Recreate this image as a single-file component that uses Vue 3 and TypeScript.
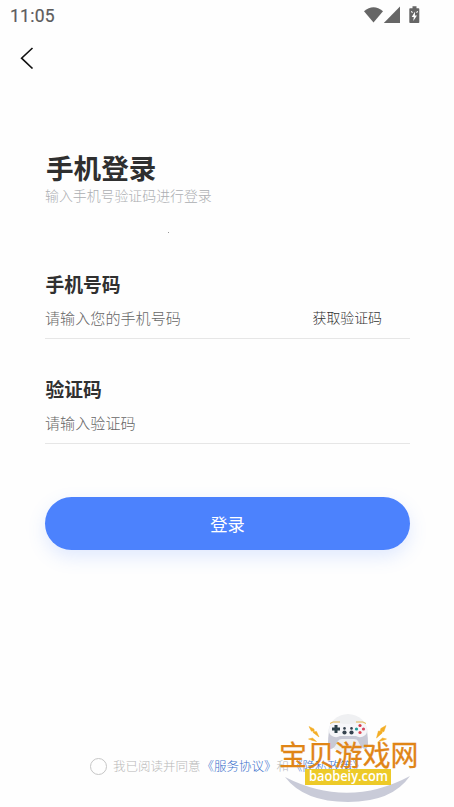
<script setup lang="ts">
import { ref } from 'vue'

interface Field {
  label: string
  placeholder: string
  type: string
  action?: string
}

const fields: Field[] = [
  { label: '手机号码', placeholder: '请输入您的手机号码', type: 'tel', action: '获取验证码' },
  { label: '验证码', placeholder: '请输入验证码', type: 'text' },
]
const values = ref<string[]>(['', ''])
const agreed = ref(false)
</script>

<template>
  <main class="screen">
    <header class="status">
      <span class="time">11:05</span>
      <svg class="status-icons" width="58" height="20" viewBox="0 0 58 20">
        <path d="M1 5.200Q10.500 -2.800 20 5.200L10.500 16.500Z" />
        <path d="M37 .6V17H20.800Z" />
        <path d="M49.500 .2h4v2h2q.8 0 .8.8v13.200q0 .8-.8.8h-8.400q-.8 0-.8-.8V3q0-.8.8-.8h2.400z" />
        <path class="bolt" d="M52.100 5.600L48.700 11h2.100l-.5 4.100 3.700-5.500h-2.100z" />
        <path class="ticks" d="M48.500 5l.8 2M54.500 5l-.8 2" />
      </svg>
    </header>
    <nav class="nav">
      <button class="back" aria-label="返回">
        <svg width="14" height="22" viewBox="0 0 14 22"><path d="M12.500 1L1.600 11.200 12.500 21.500" /></svg>
      </button>
    </nav>

    <form class="form" @submit.prevent>
      <h1>手机登录</h1>
      <p class="sub">输入手机号验证码进行登录</p>
      <i class="speck"></i>
      <section v-for="(f, i) in fields" :key="f.label" class="field">
        <label :for="'f' + i">{{ f.label }}</label>
        <div class="row">
          <input :id="'f' + i" v-model="values[i]" :type="f.type" :placeholder="f.placeholder" />
          <button v-if="f.action" type="button" class="code">{{ f.action }}</button>
        </div>
      </section>
      <button class="submit" type="submit">登录</button>
    </form>

    <footer class="terms">
      <button class="radio" :class="{ on: agreed }" aria-label="同意" @click="agreed = !agreed"></button>
      <span>我已阅读并同意</span><a>《服务协议》</a><span class="and">和</span><a>《隐私政策》</a>
    </footer>

    <aside class="mark">
      <svg class="art" width="144" height="92" viewBox="0 0 144 92">
        <circle cx="70" cy="21" r="20" fill="#eff0f2" />
        <path d="M7 64Q70 96 132 63Q114 89 70 89T7 64Z" fill="#c9cbd8" />
        <path d="M54 12Q50 19 50 30Q50 36 53 36Q57 35 60 28Q61 26 64 26H76Q79 26 80 28Q83 35 87 36Q90 36 90 30Q90 19 86 12Z" fill="#c8c9d5" />
        <path d="M52 13Q55 9 60 10Q70 12 80 10Q85 9 88 13Q91 21 85 23.500Q81 25 78 23H62Q59 25 55 23.500Q49 21 52 13Z" fill="#f6f6f9" />
        <path d="M52 10.500l3-1.500h7M78 9h7l3 1.500" fill="none" stroke="#e3b64c" stroke-width="1" />
        <path d="M58 12v8M54 16h8" stroke="#2d4149" stroke-width="3" />
        <g fill="#35424e"><circle cx="66.500" cy="19.500" r="2.100" /><circle cx="73.500" cy="19.500" r="2.100" /><circle cx="66.500" cy="15.400" r="1.300" /><circle cx="73.500" cy="15.400" r="1.300" /></g>
        <circle cx="82" cy="12.500" r="1.600" fill="#d93c4b" /><circle cx="82" cy="19.500" r="1.600" fill="#df4b56" />
        <circle cx="78.500" cy="16" r="1.600" fill="#249b9a" /><circle cx="85.500" cy="16" r="1.600" fill="#d74760" />
        <g fill="#f3ad24" stroke="#f3ad24" stroke-width=".5">
          <path d="M31 13.500L36 16l.3 2.700 2.200-.3L41 24l-6-4.600.4-1.400-2 .2z" />
          <path d="M108 12.500L102.800 15.500l-.5 2.700-1.900-.2L98.500 25l5.800-5.100-.6-1.400 2.200.2z" />
          <path d="M30.500 26l4-1 4 3.500-4-1zM108.500 26l-4-1-4 3.500 4-1z" />
        </g>
      </svg>
      <strong class="brand">宝贝游戏网</strong>
      <span class="domain"><svg width="86" height="16" viewBox="0 0 86 16"><text x="4" y="12" textLength="79" lengthAdjust="spacingAndGlyphs">baobeiy.com</text></svg></span>
    </aside>
  </main>
</template>

<style>
body { background: #fefefe; }
</style>

<style scoped>
* { box-sizing: border-box; }
.screen {
  position: relative;
  display: flex;
  flex-direction: column;
  height: 807px;
  overflow: hidden;
  background: #fefefe;
  font-family: "Noto Sans CJK SC", sans-serif;
  font-weight: 300;
  color: #303030;
}
button { padding: 0; border: 0; background: none; font-family: inherit; font-weight: inherit; }
.status {
  display: flex;
  justify-content: space-between;
  height: 32px;
  padding: 6px 33px 0 10px;
}
.time { font: 400 17.5px/20px Roboto, sans-serif; letter-spacing: .25px; color: #5c5c5c; -webkit-text-stroke: .2px #5c5c5c; }
.status-icons { fill: #666; }
.status-icons .bolt { fill: #fff; }
.status-icons .ticks { stroke: #fff; stroke-width: 1; }
.nav { display: flex; height: 52px; padding: 15px 20px; }
.back { display: flex; width: 14px; height: 22px; }
.back path { fill: none; stroke: #111; stroke-width: 1.6; }
.form { display: flex; flex-direction: column; padding: 65px 44px 0 45px; }
h1 { margin: 0; padding-left: 1px; font-size: 27.6px; font-weight: 700; line-height: 36px; color: #2f2f2f; }
.sub { margin: 0; font-size: 13.9px; line-height: 20px; color: #acaeb2; }
.speck { width: 1px; height: 1px; margin: 27px 0 37px 123px; background: #999; }
.field { display: flex; flex-direction: column; height: 105px; }
label { height: 28px; padding-left: .5px; font-size: 18.8px; font-weight: 700; line-height: 28px; }
.row {
  display: flex;
  align-items: flex-start;
  height: 41px;
  padding: 6px 28px 0 0;
  border-bottom: 1px solid #e6e6e6;
}
input {
  flex: 1;
  min-width: 0;
  height: 26px;
  padding: 0;
  border: 0;
  outline: 0;
  background: transparent;
  font: 300 15.1px/26px "Noto Sans CJK SC", sans-serif;
  color: #333;
}
input::placeholder { color: #666; opacity: 1; }
.code { font-size: 13.9px; line-height: 26px; color: #333; }
.submit {
  height: 53px;
  margin-top: 17px;
  border-radius: 27px;
  background: #4c82fd;
  box-shadow: 0 7px 18px rgba(76, 130, 253, .17);
  color: #fff;
  font-size: 17.3px;
  font-weight: 400;
  line-height: 53px;
}
.terms {
  display: flex;
  align-items: center;
  height: 20px;
  margin: auto 0 31px 90px;
  font-size: 12.5px;
  line-height: 20px;
  white-space: nowrap;
  color: #b8b8b8;
}
.radio { width: 17px; height: 17px; margin-right: 6px; border: 1px solid #c6c6c6; border-radius: 50%; }
.radio.on { background: #4c82fd; }
.terms a { margin-left: 1px; color: #3970cc; }
.mark { position: absolute; left: 278px; top: 713px; width: 144px; height: 92px; }
.art { position: absolute; left: 0; top: 0; }
.brand {
  position: absolute;
  left: 1px;
  top: 21px;
  font-size: 27.9px;
  font-weight: 400;
  line-height: 40px;
  white-space: nowrap;
  color: #e08516;
  -webkit-text-stroke: .3px #e08516;
}
.domain { position: absolute; left: 27px; top: 56px; display: flex; background: #edca28; }
.domain text { fill: #fff; font: 600 15px "Open Sans", sans-serif; }
</style>
